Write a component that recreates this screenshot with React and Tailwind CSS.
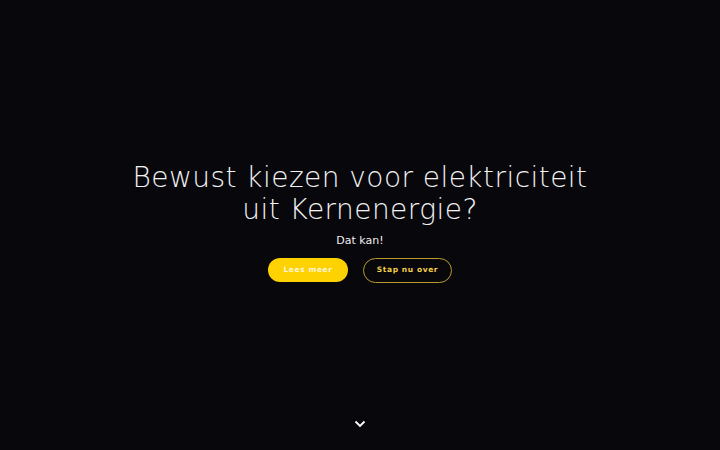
import React from "react";

export default function App() {
  return (
    <div
      className="flex h-[450px] w-full flex-col bg-[#08070c] text-white"
      style={{ fontFamily: '"DejaVu Sans", sans-serif' }}
    >
      <div className="flex flex-1 flex-col items-center justify-center pt-[24px]">
        <h1 className="text-center text-[28px] font-extralight leading-[32px] tracking-[0.45px] text-[#f2f2f2]">
          Bewust kiezen voor elektriciteit
          <br />
          uit Kernenergie?
        </h1>
        <p className="mt-[8px] text-[11px] leading-[14px] text-[#eeeeee]">Dat kan!</p>
        <div className="mt-[10px] flex items-center gap-[15px]">
          <a className="flex h-[24px] w-[80px] items-center justify-center rounded-full bg-[#fed100] text-[7.5px] font-bold tracking-[0.6px] text-[#fdf6d8]">
            Lees meer
          </a>
          <a className="flex h-[25px] w-[89px] items-center justify-center rounded-full border border-[#b89a2e] text-[7.5px] font-bold tracking-[0.6px] text-[#f3cf45]">
            Stap nu over
          </a>
        </div>
      </div>
      <div className="flex justify-center pb-[22px]">
        <svg width="12" height="8" viewBox="0 0 12 8" fill="none">
          <path d="M1.5 1.5 L6 6 L10.5 1.5" stroke="#ffffff" strokeWidth="1.8" />
        </svg>
      </div>
    </div>
  );
}
